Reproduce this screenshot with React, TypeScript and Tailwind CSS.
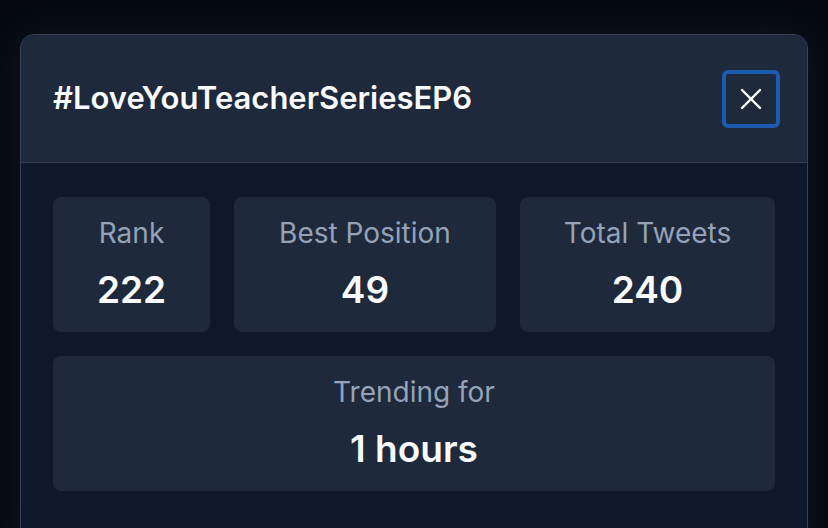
import { X } from "lucide-react";

function Stat({ label, value, width }: { label: string; value: string; width: string }) {
  return (
    <div className={`${width} flex h-[135px] flex-col items-center justify-center rounded-lg bg-[#1e293b] pb-[3px]`}>
      <p className="text-[28px] leading-none text-[#94a3b8]">{label}</p>
      <p className="mt-[24px] text-[37px] font-semibold leading-none text-[#f8fafc]">{value}</p>
    </div>
  );
}

export default function App() {
  return (
    <div
      className="h-[528px] w-[828px] overflow-hidden bg-[#060910] pt-[34px] pl-[20px]"
      style={{ fontFamily: "Inter, 'Noto Sans', sans-serif" }}
    >
      <div className="h-[520px] w-[788px] overflow-hidden rounded-t-[14px] border border-[#364357] bg-[#0f172a] shadow-[0_0_40px_rgba(40,60,90,0.25)]">
        {/* Header */}
        <div className="flex h-[128px] items-center justify-between border-b border-[#334155] bg-[#1e293b] pl-[32px] pr-[27px]">
          <h2 className="text-[31px] font-semibold text-[#f8fafc]">#LoveYouTeacherSeriesEP6</h2>
          <button className="flex h-[58px] w-[58px] items-center justify-center rounded-[6px] border-[4px] border-[#1c5bb0] text-white">
            <X className="h-[36px] w-[36px]" strokeWidth={1.6} />
          </button>
        </div>

        {/* Body */}
        <div className="flex flex-col gap-[24px] px-[32px] pt-[34px]">
          <div className="flex gap-[24px]">
            <Stat label="Rank" value="222" width="w-[157px]" />
            <Stat label="Best Position" value="49" width="w-[262px]" />
            <Stat label="Total Tweets" value="240" width="w-[255px]" />
          </div>
          <div className="flex h-[135px] flex-col items-center justify-center rounded-lg bg-[#1e293b] pb-[3px]">
            <p className="text-[28px] leading-none text-[#94a3b8]">Trending for</p>
            <p className="mt-[24px] text-[37px] font-semibold leading-none text-[#f8fafc]">1 hours</p>
          </div>
        </div>
      </div>
    </div>
  );
}
